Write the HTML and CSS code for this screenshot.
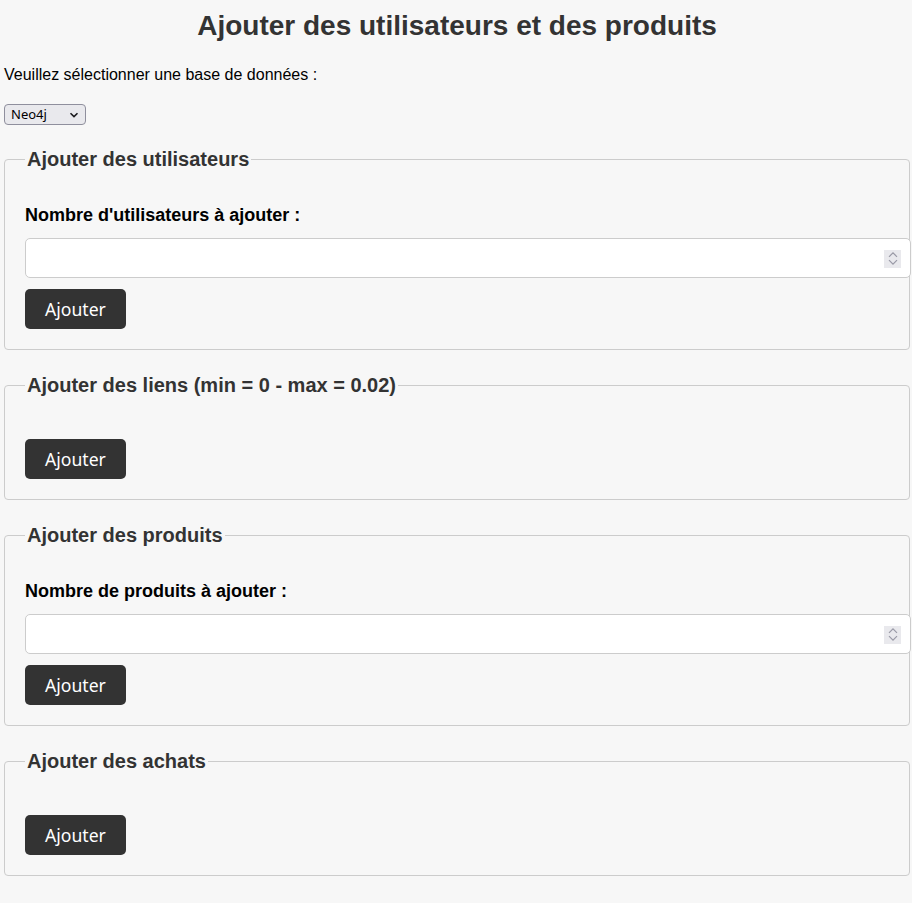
FILE: index.html
```html
<!DOCTYPE html>
<html lang="fr">
<head>
<meta charset="utf-8">
<title>Ajouter des utilisateurs et des produits</title>
<link rel="stylesheet" href="styles.css">
</head>
<body>
<h1 class="page-title">Ajouter des utilisateurs et des produits</h1>
<p class="intro">Veuillez sélectionner une base de données :</p>
<div class="select-wrap">
  <select class="db-select">
    <option>Neo4j</option>
    <option>MySQL</option>
  </select>
  <svg class="select-chevron" width="10" height="6" viewBox="0 0 10 6" aria-hidden="true"><path d="M1.5 1.2 L5 4.6 L8.5 1.2" fill="none" stroke="#1b1b1f" stroke-width="1.6"/></svg>
</div>

<fieldset class="panel">
  <legend class="panel-legend">Ajouter des utilisateurs</legend>
  <label class="field-label" for="nb-users">Nombre d'utilisateurs à ajouter :</label>
  <div class="num-wrap">
    <input class="num-input" type="number" id="nb-users">
    <span class="spinner" aria-hidden="true">
      <svg width="17" height="18" viewBox="0 0 17 18"><path d="M5 6.8 L9 2.8 L13 6.8 M5 10.2 L9 14.2 L13 10.2" fill="none" stroke="#9a9aa6" stroke-width="1.2"/></svg>
    </span>
  </div>
  <button class="btn" type="button">Ajouter</button>
</fieldset>

<fieldset class="panel">
  <legend class="panel-legend">Ajouter des liens (min = 0 - max = 0.02)</legend>
  <button class="btn" type="button">Ajouter</button>
</fieldset>

<fieldset class="panel">
  <legend class="panel-legend">Ajouter des produits</legend>
  <label class="field-label" for="nb-products">Nombre de produits à ajouter :</label>
  <div class="num-wrap">
    <input class="num-input" type="number" id="nb-products">
    <span class="spinner" aria-hidden="true">
      <svg width="17" height="18" viewBox="0 0 17 18"><path d="M5 6.8 L9 2.8 L13 6.8 M5 10.2 L9 14.2 L13 10.2" fill="none" stroke="#9a9aa6" stroke-width="1.2"/></svg>
    </span>
  </div>
  <button class="btn" type="button">Ajouter</button>
</fieldset>

<fieldset class="panel">
  <legend class="panel-legend">Ajouter des achats</legend>
  <button class="btn" type="button">Ajouter</button>
</fieldset>
</body>
</html>
```

FILE: styles.css
```css
html {
  background: #f7f7f7;
}

body {
  margin: 0;
  padding: 0 2px 0 4px;
  background: #f7f7f7;
  color: #000;
  font-family: "Liberation Sans", Arial, sans-serif;
  font-size: 16px;
}

.page-title {
  margin: 10px 0 24px;
  font-size: 28px;
  line-height: 32px;
  font-weight: bold;
  text-align: center;
  color: #333;
}

.intro {
  margin: 0 0 20px;
  line-height: 18px;
}

.select-wrap {
  position: relative;
  width: 82px;
  height: 21px;
  margin-bottom: 23px;
}

.db-select {
  display: block;
  width: 82px;
  height: 21px;
  margin: 0;
  padding: 0 0 0 6px;
  -webkit-appearance: none;
  appearance: none;
  background: #e9e9ed;
  border: 1px solid #8f8f9d;
  border-radius: 4px;
  color: #000;
  font-family: "Noto Sans", "Open Sans", sans-serif;
  font-size: 13px;
  line-height: 19px;
}

.select-chevron {
  position: absolute;
  right: 7px;
  top: 8px;
  pointer-events: none;
}

.panel {
  margin: 0 0 24px;
  padding: 34px 20px 20px;
  border: 1px solid #ccc;
  border-radius: 4px;
  min-inline-size: 0;
}

.panel-legend {
  padding: 0 2px;
  font-size: 20px;
  line-height: 23px;
  font-weight: bold;
  color: #333;
}

.field-label {
  display: block;
  margin-bottom: 12px;
  font-size: 18px;
  line-height: 21px;
  font-weight: bold;
  color: #000;
}

.num-wrap {
  position: relative;
  width: calc(100% + 22px);
  margin-bottom: 11px;
}

.num-input {
  display: block;
  box-sizing: border-box;
  width: 100%;
  height: 40px;
  margin: 0;
  padding: 10px;
  border: 1px solid #ccc;
  border-radius: 5px;
  background: #fff;
  font-family: "Liberation Sans", Arial, sans-serif;
  font-size: 16px;
  line-height: 18px;
  -moz-appearance: textfield;
}

.num-input::-webkit-inner-spin-button,
.num-input::-webkit-outer-spin-button {
  -webkit-appearance: none;
  margin: 0;
}

.spinner {
  position: absolute;
  right: 10px;
  top: 12px;
  width: 17px;
  height: 18px;
  background: #e9e9ed;
  display: block;
}

.spinner svg {
  display: block;
}

.btn {
  display: block;
  margin: 8px 0 0;
  padding: 10px 20px;
  border: none;
  border-radius: 5px;
  background: #333;
  color: #fff;
  font-family: "Noto Sans", "Open Sans", sans-serif;
  font-size: 17.6px;
  line-height: 20px;
  cursor: pointer;
}
```
